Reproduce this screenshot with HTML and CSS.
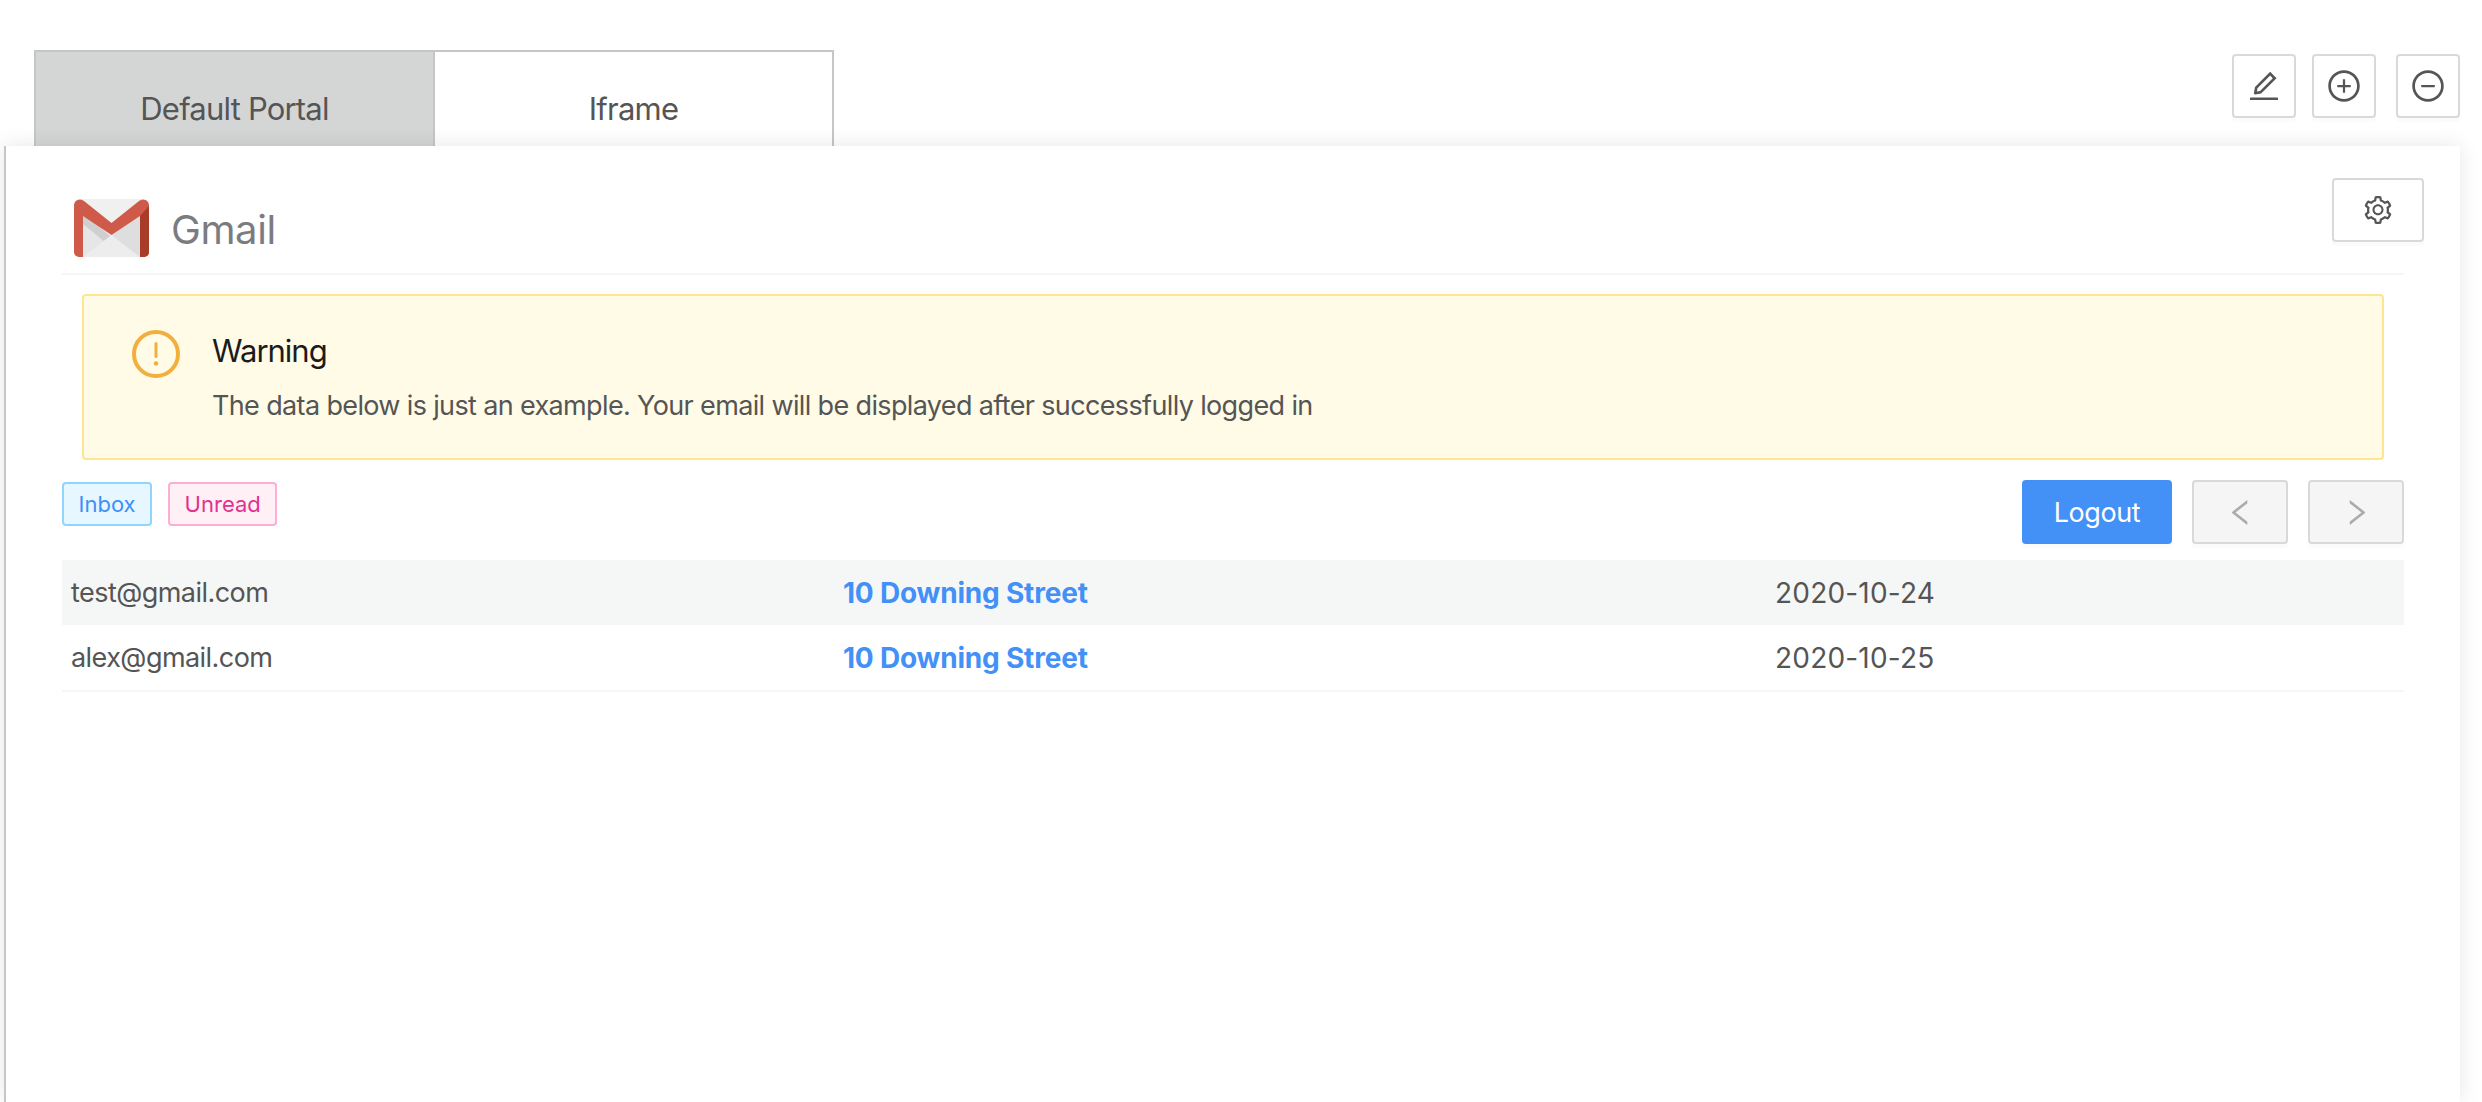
FILE: index.html
```html
<!DOCTYPE html>
<html lang="en">
  <head>
    <meta charset="UTF-8" />
    <title>Portal</title>
    <link rel="stylesheet" href="styles.css">
  </head>
  <body>
    <div class="topbar">
      <div class="tabs">
        <div class="tab tab-off">Default Portal</div>
        <div class="tab">Iframe</div>
      </div>
      <div class="tools">
        <button class="btn icon-btn">
          <svg class="ic-36" viewBox="0 0 1024 1024"><path d="M257.7 752c2 0 4-.2 6-.5L431.9 722c2-.4 3.9-1.3 5.3-2.8l423.9-423.9a9.96 9.96 0 0 0 0-14.1L694.9 114.9c-1.9-1.9-4.4-2.9-7.1-2.9s-5.2 1-7.1 2.9L256.8 538.8c-1.4 1.4-2.3 3.2-2.8 5.3l-29.5 168.2a33.5 33.5 0 0 0 9.4 29.8c6.6 6.4 14.9 9.9 23.8 9.9zm67.4-174.4L687.8 215l73.3 73.3-362.7 362.6-88.9 15.7 15.6-89zM880 836H144c-17.7 0-32 14.3-32 32v36c0 4.4 3.6 8 8 8h784c4.4 0 8-3.6 8-8v-36c0-17.7-14.3-32-32-32z"/></svg>
        </button>
        <button class="btn icon-btn">
          <svg class="ic-36" viewBox="0 0 1024 1024"><path d="M696 480H544V328c0-4.4-3.6-8-8-8h-48c-4.4 0-8 3.6-8 8v152H328c-4.4 0-8 3.6-8 8v48c0 4.4 3.6 8 8 8h152v152c0 4.4 3.6 8 8 8h48c4.4 0 8-3.6 8-8V544h152c4.4 0 8-3.6 8-8v-48c0-4.4-3.6-8-8-8z"/><path d="M512 64C264.6 64 64 264.6 64 512s200.6 448 448 448 448-200.6 448-448S759.4 64 512 64zm0 820c-205.4 0-372-166.6-372-372s166.6-372 372-372 372 166.6 372 372-166.6 372-372 372z"/></svg>
        </button>
        <button class="btn icon-btn minus-btn">
          <svg class="ic-36" viewBox="0 0 1024 1024"><path d="M696 480H328c-4.4 0-8 3.6-8 8v48c0 4.4 3.6 8 8 8h368c4.4 0 8-3.6 8-8v-48c0-4.4-3.6-8-8-8z"/><path d="M512 64C264.6 64 64 264.6 64 512s200.6 448 448 448 448-200.6 448-448S759.4 64 512 64zm0 820c-205.4 0-372-166.6-372-372s166.6-372 372-372 372 166.6 372 372-166.6 372-372 372z"/></svg>
        </button>
      </div>
    </div>

    <div class="panel">
      <button class="btn gear-btn">
        <svg class="ic-32" viewBox="0 0 1024 1024"><path d="M924.8 625.7l-65.5-56c3.1-19 4.7-38.4 4.7-57.8s-1.6-38.8-4.7-57.8l65.5-56a32.03 32.03 0 0 0 9.3-35.2l-.9-2.6a443.74 443.74 0 0 0-79.7-137.9l-1.8-2.1a32.12 32.12 0 0 0-35.1-9.5l-81.3 28.9c-30-24.6-63.5-44-99.7-57.6l-15.7-85a32.05 32.05 0 0 0-25.8-25.7l-2.7-.5c-52.1-9.4-106.9-9.4-159 0l-2.7.5a32.05 32.05 0 0 0-25.8 25.7l-15.8 85.4a351.86 351.86 0 0 0-99 57.4l-81.9-29.1a32 32 0 0 0-35.1 9.5l-1.8 2.1a446.02 446.02 0 0 0-79.7 137.9l-.9 2.6c-4.5 12.5-.8 26.5 9.3 35.2l66.3 56.6c-3.1 18.8-4.6 38-4.6 57.1 0 19.2 1.5 38.4 4.6 57.1L99 625.5a32.03 32.03 0 0 0-9.3 35.2l.9 2.6c18.1 50.4 44.9 96.9 79.7 137.9l1.8 2.1a32.12 32.12 0 0 0 35.1 9.5l81.9-29.1c29.8 24.5 63.1 43.9 99 57.4l15.8 85.4a32.05 32.05 0 0 0 25.8 25.7l2.7.5a449.4 449.4 0 0 0 159 0l2.7-.5a32.05 32.05 0 0 0 25.8-25.7l15.7-85a350 350 0 0 0 99.7-57.6l81.3 28.9a32 32 0 0 0 35.1-9.5l1.8-2.1c34.8-41.1 61.6-87.5 79.7-137.9l.9-2.6c4.5-12.3.8-26.3-9.3-35zM788.3 465.9c2.5 15.1 3.8 30.6 3.8 46.1s-1.3 31-3.8 46.1l-6.6 40.1 74.7 63.9a370.03 370.03 0 0 1-42.6 73.6L721 702.8l-31.4 25.8c-23.9 19.6-50.5 35-79.3 45.8l-38.1 14.3-17.9 97a377.5 377.5 0 0 1-85 0l-17.9-97.2-37.8-14.5c-28.5-10.8-55-26.2-78.7-45.7l-31.4-25.9-93.4 33.2c-17-22.9-31.2-47.6-42.6-73.6l75.5-64.5-6.5-40c-2.4-14.9-3.7-30.3-3.7-45.5 0-15.3 1.2-30.6 3.7-45.5l6.5-40-75.5-64.5c11.3-26.1 25.6-50.7 42.6-73.6l93.4 33.2 31.4-25.9c23.7-19.5 50.2-34.9 78.7-45.7l37.9-14.3 17.9-97.2c28.1-3.2 56.8-3.2 85 0l17.9 97 38.1 14.3c28.7 10.8 55.4 26.2 79.3 45.8l31.4 25.8 92.8-32.9c17 22.9 31.2 47.6 42.6 73.6L781.8 426l6.5 39.9zM512 326c-97.2 0-176 78.8-176 176s78.8 176 176 176 176-78.8 176-176-78.8-176-176-176zm79.2 255.2A111.6 111.6 0 0 1 512 614c-29.9 0-58-11.7-79.2-32.8A111.6 111.6 0 0 1 400 502c0-29.9 11.7-58 32.8-79.2C454 401.6 482.1 390 512 390c29.9 0 58 11.6 79.2 32.8A111.6 111.6 0 0 1 624 502c0 29.9-11.7 58-32.8 79.2z"/></svg>
      </button>

      <div class="head">
        <svg class="gmail" viewBox="0 0 75 58">
          <rect width="75" height="58" rx="5" fill="#f0f0f0"/>
          <path d="M9 58V17l28.500 21L66 17v41z" fill="#e6e6e6"/>
          <path d="M9 14l28.500 24-6 5.500L9 25z" fill="#cfcfcf"/>
          <path d="M9 58l28.500-22L66 58z" fill="#ededed"/>
          <path d="M37.500 36L66 17v41z" fill="#dedede"/>
          <path d="M0 6a6 6 0 0 1 10-4l27.500 22L65 2a6 6 0 0 1 10 4v47a5 5 0 0 1-5 5h-4V17L37.500 36 9 17v41H5a5 5 0 0 1-5-5z" fill="#d05a4a"/>
          <path d="M66 17l9-10v46a5 5 0 0 1-5 5h-4z" fill="#a93c28"/>
        </svg>
        <span class="head-title">Gmail</span>
      </div>

      <div class="alert">
        <svg class="alert-ic" viewBox="0 0 48 48">
          <circle cx="24" cy="24" r="22" fill="none" stroke="#f3af3d" stroke-width="4"/>
          <rect x="22.500" y="12" width="3" height="16" rx="1.500" fill="#f3af3d"/>
          <circle cx="24" cy="33.500" r="2.300" fill="#f3af3d"/>
        </svg>
        <div>
          <div class="alert-title">Warning</div>
          <div class="alert-text">The data below is just an example. Your email will be displayed after successfully logged in</div>
        </div>
      </div>

      <div class="actions">
        <div class="tags">
          <span class="tag tag-blue">Inbox</span>
          <span class="tag tag-pink">Unread</span>
        </div>
        <div class="pager">
          <button class="btn btn-primary">Logout</button>
          <button class="btn btn-off">
            <svg class="ic-33" viewBox="0 0 1024 1024"><path d="M724 218.3V141c0-6.7-7.7-10.4-12.9-6.3L260.3 486.8a31.86 31.86 0 0 0 0 50.3l450.8 352.1c5.3 4.1 12.9.4 12.9-6.3v-77.3c0-4.9-2.3-9.6-6.1-12.6l-360-281 360-281.1c3.800-3 6.100-7.700 6.100-12.600z"/></svg>
          </button>
          <button class="btn btn-off">
            <svg class="ic-33" viewBox="0 0 1024 1024"><path d="M765.7 486.8L314.9 134.7A7.97 7.97 0 0 0 302 141v77.3c0 4.9 2.3 9.6 6.1 12.6l360 281.1-360 281.1c-3.9 3-6.1 7.7-6.1 12.6V883c0 6.7 7.7 10.4 12.9 6.3l450.8-352.1a31.96 31.96 0 0 0 0-50.400z"/></svg>
          </button>
        </div>
      </div>

      <table class="mail">
        <colgroup>
          <col class="col-from" />
          <col class="col-subject" />
          <col />
        </colgroup>
        <tr class="row-hl">
          <td class="from">test@gmail.com</td>
          <td><a class="subject">10 Downing Street</a></td>
          <td class="date">2020-10-24</td>
        </tr>
        <tr>
          <td class="from">alex@gmail.com</td>
          <td><a class="subject">10 Downing Street</a></td>
          <td class="date">2020-10-25</td>
        </tr>
      </table>
    </div>
  </body>
</html>
```

FILE: styles.css
```css
html,
body {
  height: 100%;
}

body {
  margin: 0;
  overflow: hidden;
  background: #fff;
  color: #555;
  font-family: "Inter", "Liberation Sans", sans-serif;
  font-size: 28px;
}

svg {
  display: block;
  fill: currentColor;
}

.ic-32 {
  width: 32px;
  height: 32px;
}

.ic-33 {
  width: 33px;
  height: 33px;
}

.ic-36 {
  width: 36px;
  height: 36px;
}

/* top row */
.topbar {
  display: flex;
  justify-content: space-between;
  align-items: flex-start;
  height: 146px;
  padding: 50px 22px 0 34px;
  box-sizing: border-box;
}

.tabs {
  display: flex;
}

.tab {
  width: 399px;
  height: 96px;
  box-sizing: border-box;
  border: 2px solid #c6c6c6;
  border-left: 0;
  border-bottom: 0;
  display: flex;
  align-items: center;
  justify-content: center;
  font-size: 31px;
  letter-spacing: -0.8px;
  padding-top: 18px;
}

.tab-off {
  width: 401px;
  border-left: 2px solid #c6c6c6;
  background: #d4d6d5;
}

.tools {
  display: flex;
  gap: 16px;
  padding-top: 4px;
}

.minus-btn {
  margin-left: 4px;
}

/* buttons */
.btn {
  display: flex;
  align-items: center;
  justify-content: center;
  height: 64px;
  padding: 0;
  box-sizing: border-box;
  border: 2px solid #d9d9d9;
  border-radius: 4px;
  background: #fff;
  color: #555;
  font-family: inherit;
  box-shadow: 0 4px 0 rgba(0, 0, 0, 0.015);
}

.icon-btn {
  width: 64px;
}

.gear-btn {
  position: absolute;
  top: 32px;
  right: 36px;
  width: 92px;
}

.btn-primary {
  width: 150px;
  border-color: #4390f7;
  background: #4390f7;
  color: #fff;
  font-size: 27px;
  letter-spacing: -0.4px;
}

.btn-off {
  width: 96px;
  background: #f5f5f5;
  color: rgba(0, 0, 0, 0.3);
}

/* panel */
.panel {
  position: relative;
  width: 2456px;
  height: 956px;
  margin-left: 4px;
  padding: 0 56px;
  box-sizing: border-box;
  border-left: 2px solid #c6c6c6;
  background: #fff;
  box-shadow: 0 0 20px rgba(0, 0, 0, 0.1);
}

.head {
  display: flex;
  align-items: center;
  gap: 22px;
  height: 129px;
  padding: 53px 0 0 12px;
  box-sizing: border-box;
  border-bottom: 2px solid #f6f6fa;
}

.gmail {
  width: 75px;
  height: 58px;
  margin-bottom: 16px;
}

.head-title {
  font-size: 40px;
  letter-spacing: -0.4px;
  color: #7b7c80;
  margin-bottom: 14px;
}

.alert {
  display: flex;
  height: 166px;
  margin: 19px 20px 20px;
  box-sizing: border-box;
  padding: 34px 0 0 48px;
  border: 2px solid #ffe58f;
  border-radius: 4px;
  background: #fffbe6;
}

.alert-ic {
  width: 48px;
  height: 48px;
  margin-right: 32px;
}

.alert-title {
  font-size: 31px;
  letter-spacing: -1px;
  line-height: 42px;
  color: #1b1b1b;
}

.alert-text {
  margin-top: 12px;
  font-size: 27px;
  letter-spacing: -0.64px;
  line-height: 44px;
}

.actions {
  display: flex;
  justify-content: space-between;
  height: 80px;
}

.tags {
  display: flex;
  gap: 16px;
  padding-top: 2px;
  align-items: flex-start;
}

.tag {
  height: 44px;
  line-height: 40px;
  padding: 0 14.5px;
  box-sizing: border-box;
  border: 2px solid;
  border-radius: 4px;
  font-size: 22px;
}

.tag-blue {
  color: #3f8ff7;
  background: #e6f7ff;
  border-color: #91d5ff;
}

.tag-pink {
  color: #e0338f;
  background: #fff0f6;
  border-color: #ffadd2;
}

.pager {
  display: flex;
  gap: 20px;
}

/* mail list */
.mail {
  width: 100%;
  table-layout: fixed;
  border-collapse: collapse;
}

.col-from {
  width: 772px;
}

.col-subject {
  width: 932px;
}

.mail td {
  height: 65px;
  padding: 0 9px;
  border-bottom: 2px solid #f6f6fa;
}

.mail .row-hl td {
  background: #f5f7f7;
  border-bottom: 0;
}

.from {
  font-size: 27px;
  letter-spacing: -0.55px;
}

.date {
  letter-spacing: 0.2px;
}

.subject {
  color: #4390f7;
  font-weight: 700;
  letter-spacing: -0.2px;
}
```
